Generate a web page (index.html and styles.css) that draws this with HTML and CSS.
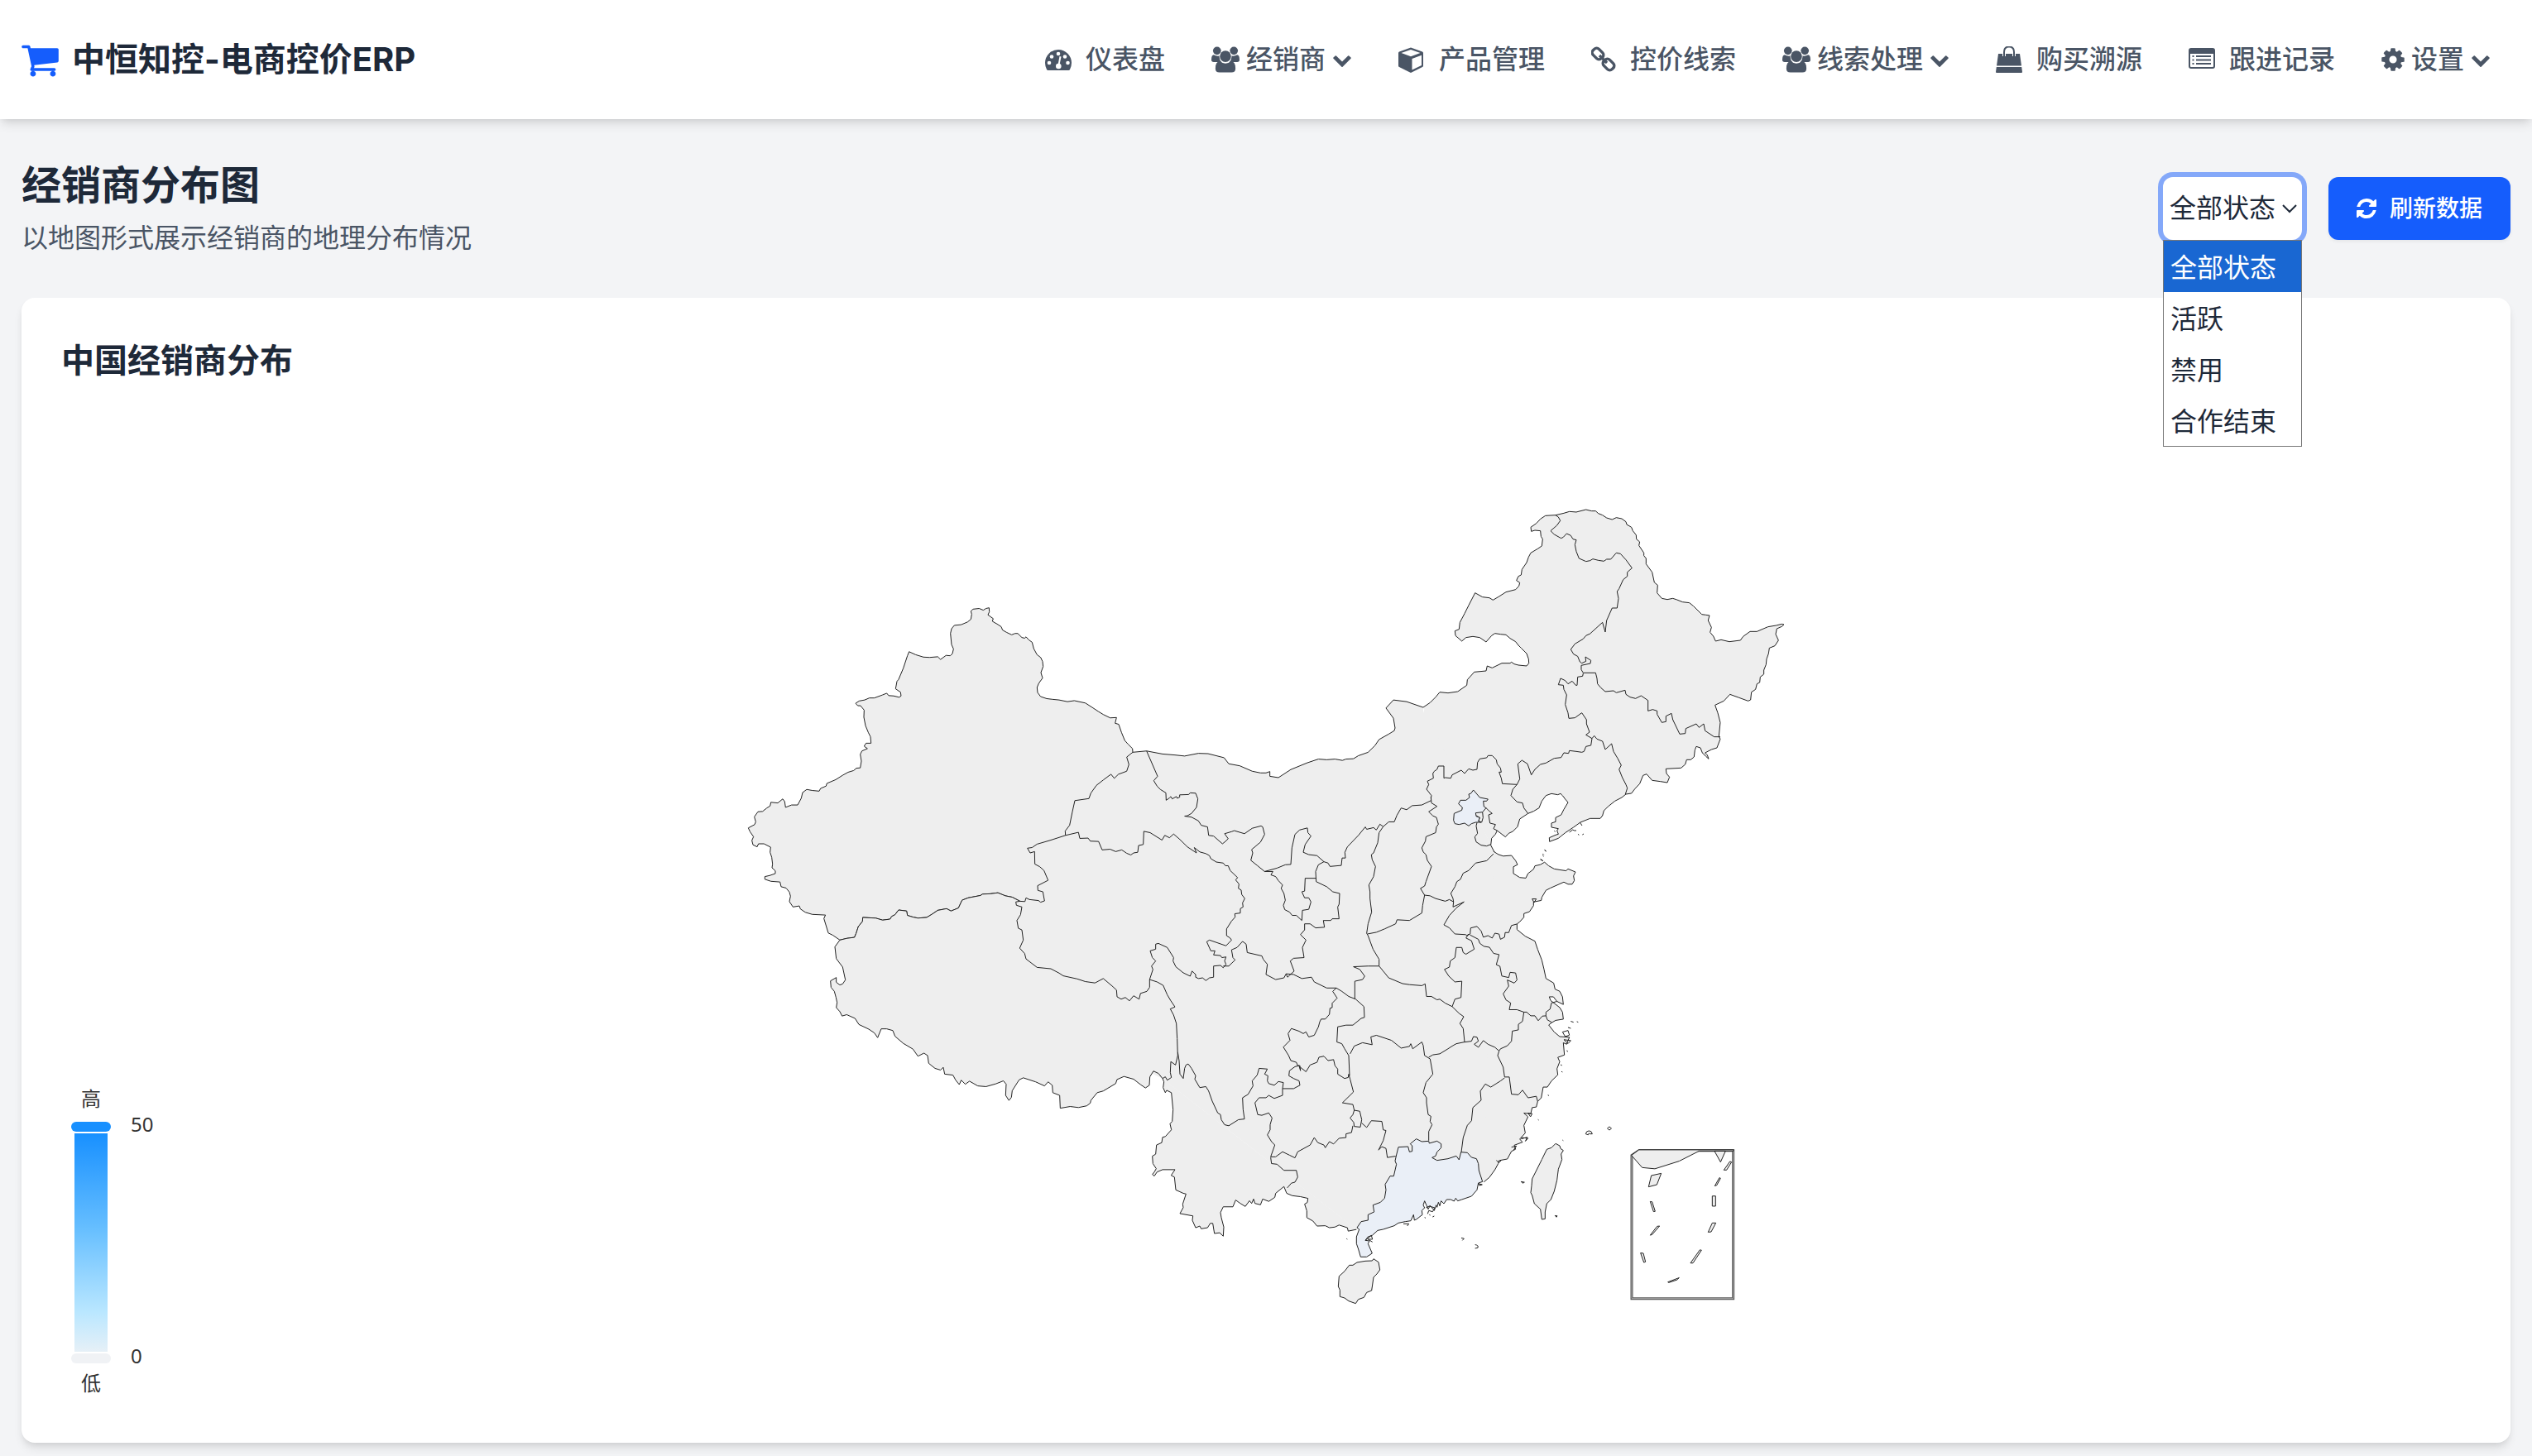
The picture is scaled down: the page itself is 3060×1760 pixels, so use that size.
FILE: index.html
```html
<!DOCTYPE html>
<html lang="zh-CN">
<head>
<meta charset="utf-8">
<meta name="viewport" content="width=device-width, initial-scale=1">
<title>经销商分布图 - 中恒知控</title>
<link rel="stylesheet" href="styles.css">
</head>
<body>
<svg class="sprite" aria-hidden="true">
  <symbol id="i-users" viewBox="0 0 35 34">
    <circle cx="7" cy="6" r="5"/><circle cx="28" cy="6" r="5"/>
    <path d="M3 11q2 1.500 5 1.500 2 0 2.500-.5-1 5 2 8H3q-3 0-3-2.500Q0 11 3 11zM32 11q-2 1.500-5 1.500-2 0-2.500-.5 1 5-2 8H32q3 0 3-2.500Q35 11 32 11z"/>
    <circle cx="17.500" cy="13" r="7.800" fill="#fff"/><circle cx="17.500" cy="13" r="7"/>
    <path d="M11 19q3 3 6.500 3t6.500-3q6 0 6 9 0 5-5 5H10q-5 0-5-5 0-9 6-9z"/>
  </symbol>
  <symbol id="i-chevron" viewBox="0 0 1792 1792"><path d="M1683 808l-742 741q-19 19-45 19t-45-19l-742-741q-19-19-19-45.500t19-45.500l166-165q19-19 45-19t45 19l531 531 531-531q19-19 45-19t45 19l166 165q19 19 19 45.500t-19 45.500z"/></symbol>
</svg>

<header class="topbar">
  <a class="brand" href="#">
    <svg class="brand-icon" viewBox="64 0 1664 1792" aria-hidden="true"><path d="M704 1536q0 52-38 90t-90 38-90-38-38-90 38-90 90-38 90 38 38 90zm896 0q0 52-38 90t-90 38-90-38-38-90 38-90 90-38 90 38 38 90zm128-1088v512q0 24-16.500 42.500t-40.500 21.500l-1044 122q13 60 13 70 0 16-24 64h920q26 0 45 19t19 45-19 45-45 19h-1024q-26 0-45-19t-19-45q0-11 8-31.500t16-36 21.500-40 15.500-29.500l-177-823h-204q-26 0-45-19t-19-45 19-45 45-19h256q16 0 28.500 6.500t19.500 15.500 13 24.500 8 26 5.500 29.500 4.500 26h1201q26 0 45 19t19 45z"/></svg>
    <span>中恒知控-电商控价ERP</span>
  </a>
  <nav class="nav" aria-label="主导航">
    <a class="nav-link" href="#">
      <svg class="icon" viewBox="0 0 32 32" aria-hidden="true"><path d="M0 20a16 16 0 0 1 32 0q0 4-2 8-.5 1-1.500 1h-25q-1 0-1.500-1-2-4-2-8z"/><g fill="#fff"><circle cx="5" cy="20" r="2.300"/><circle cx="8" cy="12.500" r="2.300"/><circle cx="16" cy="9" r="2.300"/><circle cx="24" cy="12.500" r="2.300"/><circle cx="27.500" cy="20" r="2.300"/><circle cx="16.300" cy="24" r="3.300"/><path d="M17.500 12l2 .5-2.200 11h-2z"/></g></svg>
      <span>仪表盘</span>
    </a>
    <button class="nav-link nav-menu" type="button"><svg class="icon icon-users" aria-hidden="true"><use href="#i-users"/></svg><span>经销商</span><svg class="icon-chevron" aria-hidden="true"><use href="#i-chevron"/></svg></button>
    <a class="nav-link" href="#">
      <svg class="icon" viewBox="0 0 32 32" aria-hidden="true"><path fill-rule="evenodd" d="M15 1.500l14 5q1 .5 1 1.500v15.500q0 1-1 1.500l-14 7-14-7q-1-.5-1-1.500V8q0-1 1-1.500zM15 4L3.500 8 15 12.300 26.500 8zM16.500 15v13.500L28 23V10.700z"/></svg>
      <span>产品管理</span>
    </a>
    <a class="nav-link" href="#">
      <svg class="icon icon-link" viewBox="0 0 30 32" aria-hidden="true"><g fill="none" stroke="currentColor" stroke-width="3.400"><rect x="-7" y="-5" width="14" height="10" rx="4" transform="translate(8 9) rotate(45)"/><rect x="-7" y="-5" width="14" height="10" rx="4" transform="translate(21 22) rotate(45)"/><path d="M10 11l9 9"/></g></svg>
      <span>控价线索</span>
    </a>
    <button class="nav-link nav-menu" type="button"><svg class="icon icon-users" aria-hidden="true"><use href="#i-users"/></svg><span>线索处理</span><svg class="icon-chevron" aria-hidden="true"><use href="#i-chevron"/></svg></button>
    <a class="nav-link" href="#">
      <svg class="icon" viewBox="0 0 32 32" aria-hidden="true"><path d="M3 9h26l2 14.500H1zM.8 25H31.200L32 31q0 1-1 1H1q-1 0-1-1z"/><path d="M10 12V7q0-6.500 6-6.500T22 7v5" fill="none" stroke="#fff" stroke-width="4"/><path d="M10 12V7q0-6.500 6-6.500T22 7v5" fill="none" stroke="currentColor" stroke-width="2"/></svg>
      <span>购买溯源</span>
    </a>
    <a class="nav-link" href="#">
      <svg class="icon" viewBox="0 0 32 32" aria-hidden="true"><path fill-rule="evenodd" d="M3 2h26q3 0 3 3v19q0 3-3 3H3q-3 0-3-3V5q0-3 3-3zM2 9v15q0 1 1 1h26q1 0 1-1V9zM4.500 11h2v2h-2zM9 11h18v2H9zM4.500 15.500h2v2h-2zM9 15.500h18v2H9zM4.500 20h2v2h-2zM9 20h18v2H9z"/></svg>
      <span>跟进记录</span>
    </a>
    <button class="nav-link nav-menu" type="button"><svg class="icon icon-cog" viewBox="128 0 1536 1792" aria-hidden="true"><path d="M1152 896q0-106-75-181t-181-75-181 75-75 181 75 181 181 75 181-75 75-181zm512-109v222q0 12-8 23t-20 13l-185 28q-19 54-39 91 35 50 107 138 10 12 10 25t-9 23q-27 37-99 108t-94 71q-12 0-26-9l-138-108q-44 23-91 38-16 136-29 186-7 28-36 28h-222q-14 0-24.500-8.500t-11.500-21.500l-28-184q-49-16-90-37l-141 107q-10 9-25 9-14 0-25-11-126-114-165-168-7-10-7-23 0-12 8-23 15-21 51-66.500t54-70.500q-27-50-41-99l-183-27q-13-2-21-12.500t-8-23.500v-222q0-12 8-23t19-13l186-28q14-46 39-92-40-57-107-138-10-12-10-24 0-10 9-23 26-36 98.500-107.500t94.500-71.500q13 0 26 10l138 107q44-23 91-38 16-136 29-186 7-28 36-28h222q14 0 24.500 8.500t11.500 21.500l28 184q49 16 90 37l142-107q9-9 24-9 13 0 25 10 129 119 165 170 7 8 7 22 0 12-8 23-15 21-51 66.500t-54 70.500q26 50 41 98l183 28q13 2 21 12.500t8 23.500z"/></svg><span>设置</span><svg class="icon-chevron" aria-hidden="true"><use href="#i-chevron"/></svg></button>
  </nav>
</header>

<main class="page">
  <div class="page-head">
    <div class="page-heading">
      <h1>经销商分布图</h1>
      <p>以地图形式展示经销商的地理分布情况</p>
    </div>
    <div class="actions">
      <div class="status-filter">
        <select class="status-select" aria-label="经销商状态">
          <option selected>全部状态</option>
          <option>活跃</option>
          <option>禁用</option>
          <option>合作结束</option>
        </select>
        <svg class="select-arrow" viewBox="0 0 18 18" aria-hidden="true"><path d="M1 5l8 8 8-8" fill="none" stroke="currentColor" stroke-width="2"/></svg>
        <ul class="options" role="listbox" aria-label="经销商状态选项">
          <li class="option is-active" role="option" aria-selected="true">全部状态</li>
          <li class="option" role="option">活跃</li>
          <li class="option" role="option">禁用</li>
          <li class="option" role="option">合作结束</li>
        </ul>
      </div>
      <button class="refresh" type="button">
        <svg class="refresh-icon" viewBox="128 128 1536 1536" aria-hidden="true"><path d="M1639 1056q0 5-1 7-64 268-268 434.500t-478 166.500q-146 0-282.500-55t-243.500-157l-129 129q-19 19-45 19t-45-19-19-45v-448q0-26 19-45t45-19h448q26 0 45 19t19 45-19 45l-137 137q71 66 161 102t187 36q134 0 250-65t186-179q11-17 53-117 8-23 30-23h192q13 0 22.500 9.500t9.500 22.500zm25-800v448q0 26-19 45t-45 19h-448q-26 0-45-19t-19-45 19-45l138-138q-148-137-349-137-134 0-250 65t-186 179q-11 17-53 117-8 23-30 23h-199q-13 0-22.500-9.500t-9.500-22.500v-7q65-268 270-434.500t480-166.500q146 0 284 55.500t245 156.500l130-129q19-19 45-19t45 19 19 45z"/></svg>
        <span>刷新数据</span>
      </button>
    </div>
  </div>

  <section class="card">
    <h2>中国经销商分布</h2>
    <div class="chart">
      <svg class="map" viewBox="890 600 1280 992" role="img" aria-label="中国经销商分布地图">
        <polygon class="ground" points="1368,912 1388,950 1690,950 1722,856 1806,1030 1795,1428 1639,1486 1405,1304 1240,1220 1180,1000 1270,960"/>

        <!-- 东北、内蒙古、华北 -->
        <g transform="translate(1720 600) scale(.33333)">
          <path class="region" d="M0 765L25 748 45 728 60 710 90 713 125 708 158 685 160 665 185 637 228 633 232 615 250 622 285 605 315 605 320 601 330 608 345 612 375 615 383 605 382 590 375 570 355 550 345 540 335 527 315 515 300 502 280 500 260 497 248 505 228 528 205 512 180 508 155 512 140 525 117 505 115 488 130 482 133 457 150 425 165 395 188 350 215 365 240 368 253 376 275 363 300 347 335 338 347 325 350 313 338 305 345 290 355 285 358 265 375 240 382 220 390 205 415 190 430 180 433 155 427 145 425 125 405 123 392 127 390 112 410 98 425 82 443 70 480 68 510 61 530 55 555 57 590 48 610 53 625 53 635 62 650 68 665 78 685 84 700 77 720 81 735 92 738 102 755 112 760 125 772 140 773 155 785 165 782 178 800 205 800 215 808 225 808 245 830 275 838 312 850 322 848 350 865 370 885 374 905 370 920 375 940 383 965 386 980 398 1010 428 1025 430 1038 432 1033 450 1045 475 1040 493 1052 507 1060 525 1080 520 1110 527 1150 522 1160 508 1185 490 1210 490 1250 473 1280 468 1300 463 1308 465 1300 472 1282 480 1278 500 1288 522 1275 542 1255 550 1252 570 1245 590 1243 610 1235 630 1235 645 1222 655 1220 675 1210 680 1205 700 1190 710 1187 738 1178 742 1145 730 1112 718 1090 742 1058 757 1068 785 1077 820 1072 870 1077 880 1065 912 1045 918 1022 930 1030 938 1035 952 1025 943 1012 930 1005 912 990 907 985 920 982 945 970 955 955 955 950 972 935 985 880 988 882 1005 893 1018 885 1038 860 1034 830 1030 810 1007 797 1012 785 1042 768 1060 755 1077 735 1080 720 1092 695 1105 670 1125 655 1140 650 1158 642 1168 605 1168 570 1182 545 1200 515 1220 500 1232 490 1240 458 1252 457 1238 480 1228 490 1225 485 1212 490 1205 465 1200 465 1185 480 1180 480 1165 500 1155 510 1135 525 1110 515 1098 505 1085 498 1078 488 1082 465 1078 445 1085 430 1105 420 1130 400 1142 380 1150 350 1170 342 1198 325 1215 310 1222 298 1235 285 1225 268 1212 262 1225 248 1240 245 1265 258 1290"/>
          <path class="border" d="M480 68L490 75 497 88 485 105 462 125 475 138 500 152 508 148 520 135 535 142 543 155 555 158 550 175 555 200 565 225 590 236 605 233 615 227 635 232 655 235 665 228 680 228 700 205 715 208 735 230 757 260 740 275 740 290 725 302 710 335 703 345 708 370 703 405 685 405 665 450 660 492 650 457 605 498 590 505 580 517 550 535 535 555 545 572 560 580 568 600 575 605 590 598 588 582 608 595 606 606 573 613 573 628 580 640 625 640 630 660 632 680 645 695 660 708 690 705 700 712 732 703 735 718 750 728 770 733 790 723 815 740 815 778 832 773 848 778 848 790 865 820 880 817 880 797 900 787 905 810 930 862 950 860 952 842 990 825 1000 838 1017 825 1022 850 1055 872 1077 872M580 642L578 652 560 655 558 685 553 685 540 670 525 680 515 668 498 660 490 683 508 685 510 700 520 720 515 755 525 785 528 805 550 803 575 785 592 810 592 825 603 855 590 865 612 878 608 903 590 907 583 925 575 928 555 925 530 922 527 932 510 930 500 947 475 950 445 967 425 972 405 990 392 1010 378 970 358 957 343 970 350 1025 340 1045 287 1042 283 1022 275 1000 283 1000 280 985 268 970 265 955 250 940 235 940 230 948 205 952 197 965 195 990 180 993 165 988 150 1005 138 993 105 1010 100 1022 80 1020 75 1022 75 978 55 978 50 990 40 997 35 1005 37 1022 15 1033 20 1045 12 1062 30 1085 28 1094M340 1045L325 1062 318 1085 340 1108 360 1112 365 1130 380 1150M612 878L620 868 630 880 650 888 660 918 683 897 690 925 705 950 718 975 710 990 722 1020 735 1045 740 1058 733 1080M228 1130L238 1140 250 1150 237 1155 242 1185 262 1190 255 1205 268 1212M195 1183L192 1195 197 1222 187 1235 192 1253 210 1265 230 1268 245 1262M215 1145L217 1165 212 1182 200 1178 205 1165 192 1158"/>
          <path class="region is-low" d="M182 1065L195 1080 205 1092 235 1098 230 1105 218 1105 220 1125 228 1130 215 1145 190 1148 192 1160 205 1165 200 1178 210 1182 190 1182 175 1187 165 1195 150 1185 130 1190 115 1187 110 1175 112 1150 140 1138 142 1128 128 1115 135 1102 155 1102 168 1092 165 1080 172 1078z"/>
          <path class="border" d="M475 1213l4 3M530 1218l12-9 6 3 7 0M568 1182l8 12M561 1225l4 3M577 1227l5-3M440 1283l6 4M433 1296l4 4M425 1315l10 8"/>
        </g>

        <!-- 西北、西南、华中 -->
        <g transform="translate(1370 880) scale(.33333 .40816)">
          <path class="ground" d="M-5 72L47 68 105 77 150 80 185 83 235 75 270 76 328 88 345 106 385 112 430 128 460 133 480 133 494 129 494 143 525 147 570 123 630 103 670 92 700 94 730 92 757 96 770 92 797 91 815 82 850 72 875 52 890 34 925 18 945 8 948 0 942 -29 915 -59 942 -83 990 -78 1050 -61V300H-5z"/>
          <path class="border" d="M-5 72L47 68 105 77 150 80 185 83 235 75 270 76 328 88 345 106 385 112 430 128 460 133 480 133 494 129 494 143 525 147 570 123 630 103 670 92 700 94 730 92 757 96 770 92 797 91 815 82 850 72 875 52 890 34 925 18 945 8 948 0 942 -29 915 -59 942 -83 990 -78 1050 -61"/>
          <path class="region" d="M105 1038L110 1048 107 1065 115 1080 120 1073 137 1080 143 1130 140 1165 132 1172 137 1190 115 1210 105 1212 102 1228 83 1235 80 1262 68 1268 70 1290 82 1305 75 1315 68 1322 75 1327 85 1315 105 1308 150 1308 136 1325 148 1330 153 1368 180 1378 190 1380 178 1410 180 1420 168 1438 215 1445 213 1458 225 1480 240 1475 245 1483 268 1480 278 1467 287 1467 293 1497 312 1495 325 1505 327 1478 318 1450 315 1435 325 1418 360 1418 370 1398 385 1407 405 1417 420 1400 428 1408 435 1395 440 1408 460 1412 468 1395 490 1402 512 1390 515 1378 545 1358 555 1378 575 1385 605 1388 632 1393 630 1405 620 1410 628 1430 628 1450 650 1460 665 1475 695 1474 710 1480 730 1478 745 1472 775 1480 778 1490 808 1485"/>
          <path class="border" d="M47 68L87 143 73 156 85 172 97 182 117 192 118 214 130 207 135 203 140 210 155 203 158 208 167 205 167 198 200 197 205 192 225 193 233 210 228 235 210 253 195 260 185 261 210 264 235 275 245 288 268 293 272 318 290 320 322 343 330 338 343 328 330 313 355 307 365 304 402 313 430 297 462 290 468 293 475 315 460 338 428 360 432 370 425 392 448 407 475 425 520 415 550 405 570 404 574 355 585 315 602 302 630 296 632 310 643 320 622 345 615 368 635 375 665 378 690 396 705 400 712 410 753 407 756 385 768 385 766 368 775 352 815 318 840 293 845 300 870 295 880 302 893 285 905 292 925 278 945 278 955 258 970 237 990 242 1010 230 1045 228 1078 215"/>
          <path class="border" d="M0 370L15 368 18 348 35 345 37 306 60 310 103 332 113 318 130 325 145 314 165 328 195 352 228 370 220 354 240 367 262 372 275 378 280 387 300 397 325 400 333 408 343 408 350 422 377 443 370 450 382 462 380 475 390 480 392 493 403 505 395 518 397 530 387 535 387 548 367 550 368 560 355 572 337 595 337 615 350 622 355 628 335 645 275 628 265 633 280 660 295 660 290 672 315 674 320 680 335 678 330 690 335 700 325 710 315 703 290 705 290 738 275 740 262 748 250 740 235 742 225 738 225 730 212 720 205 735 180 725 153 707 143 690 145 680 122 650 90 638 80 640 80 655 60 660 68 680 80 690 65 705 70 715 58 745"/>
          <path class="border" d="M325 705L345 705 368 687 360 680 355 657 375 650 395 632 408 640 412 665 465 675 470 685 485 700 480 730 515 745 545 740 553 728 580 730 610 742 645 738 655 752 700 770 735 770 755 780 780 795 805 803M553 728L558 738 582 720 568 690 580 682 618 680 612 650 625 628 605 612 620 598 620 580 640 580 660 592 692 590 688 570 715 570 720 565 745 565 740 530 745 522 747 490 722 485 700 470 662 455 660 425 670 405 690 396M475 425L505 425 498 435 515 440 525 452 540 465 535 475 545 490 550 510 543 525 548 538 565 545 575 555 590 555 610 570 612 540 635 537 643 515 635 503 620 503 610 485 620 483 622 445 662 445M905 292L890 310 885 340 870 370 862 375 865 390 877 410 870 440 853 465 857 485 857 505 863 545 850 580 845 608 850 615 868 655 890 685 890 705 850 705 797 707 820 715 838 735 830 745 802 750 802 803M848 610L880 605 910 595 950 580 955 568 1000 570 1045 548 1048 525 1055 495M1078 205L1080 222 1100 232 1070 248 1085 260 1098 265 1105 285 1098 293 1095 310 1060 322 1058 335 1045 355 1050 367 1060 375 1065 392 1080 410 1060 455 1055 468 1040 475 1055 495 1075 497 1095 505 1130 513 1145 508 1160 515 1158 505 1150 490 1165 470 1172 455 1185 448 1195 430 1215 422 1240 400 1280 393 1290 385 1308 370M1160 515L1158 530 1198 515 1170 533 1145 555 1125 583 1145 592 1165 610 1205 612M890 705L905 720 925 740 975 757 1000 760 1045 763 1057 758 1062 795 1080 795 1100 805 1110 803 1130 815 1155 825 1165 803 1187 798 1190 750 1165 752 1143 735 1127 715 1145 708 1148 690 1165 680 1170 650 1190 650 1195 665 1205 670 1235 655 1225 630 1205 622 1215 610M735 770L722 780 738 800 720 815 720 828 712 830 710 848 695 862 680 862 675 870 670 885 655 910 635 915 625 900 615 905 600 898 572 890 560 905 567 925 543 945 562 970 570 985 590 990 595 1000 603 1000 605 1015"/>
          <path class="border" d="M605 1015L600 1000 585 1003 565 1015 563 1030 580 1038 600 1045 603 1058 580 1068 540 1068 543 1050 525 1047 510 1058 490 1053 485 1045 487 1030 475 1025 485 1010 455 1008 448 1028 430 1045 433 1060 415 1085 395 1095 397 1130 402 1158 380 1160 345 1178 330 1175 318 1160 315 1145 305 1140 285 1105 272 1075 262 1062 240 1065 222 1040 225 1030 210 1008 198 995 190 998 185 1008 180 1038 168 1025 165 985 160 960M540 1068L540 1088 510 1097 490 1088 480 1095 455 1095 440 1110 450 1145 465 1147 490 1140 502 1155 495 1175 495 1190 485 1205 500 1225 512 1235 497 1270 515 1270 540 1255 565 1265 585 1273 595 1255 640 1235 655 1213 668 1228 690 1235 695 1243 710 1225 725 1232 745 1215 770 1213 770 1202 790 1198 795 1178M605 1005L625 1018 640 998 665 990 672 975 690 972 705 985 725 982 730 1000 740 1010 740 1025 765 1038 778 1035 780 1025 785 1040 797 1078 757 1110 795 1115 800 1132 820 1135 827 1160 822 1182 800 1180 798 1168 785 1155 795 1145 800 1132M827 1170L845 1183 862 1163 900 1165 905 1190 915 1192 905 1222 888 1250 900 1240 915 1245 920 1272 950 1268M805 803L835 825 837 857 825 860 795 880 770 880 740 885 737 930 755 935 765 950 780 970 783 1030M785 965L800 942 830 932 865 938 860 915 880 910 935 925 970 948 1000 943 1005 935 1012 950 1045 930 1050 940 1055 970 1075 980 1085 1025 1060 1050 1050 1080 1062 1095 1062 1110 1068 1145 1078 1150 1075 1165 1082 1175 1070 1195 1070 1222M1070 975L1085 968 1110 965 1140 950 1155 942 1170 935 1200 930M1155 825L1180 845 1197 855 1183 875 1195 890 1200 930M497 1272L500 1290 520 1292 545 1310 590 1310 595 1330 585 1345 572 1348 557 1362"/>
        </g>

        <!-- 新疆、西藏 -->
        <g transform="translate(890 720) scale(.33333 .40816)">
          <path class="region" d="M1437 464L1436 453 1420 440 1408 429 1396 405 1386 381 1373 378 1378 361 1355 362 1330 352 1312 343 1290 331 1265 318 1225 311 1200 314 1170 309 1145 307 1125 305 1103 299 1092 287 1090 272 1096 260 1110 244 1104 228 1112 210 1110 195 1103 183 1090 175 1078 157 1072 138 1060 131 1050 122 1045 126 1035 124 1020 112 1010 112 998 116 980 109 965 102 960 92 945 84 928 76 931 68 912 57 917 48 916 36 905 38 895 43 880 38 858 40 850 46 853 55 850 70 838 78 815 86 790 88 780 98 776 112 780 145 787 158 783 172 775 178 760 177 740 189 730 181 700 183 678 182 650 175 626 166 620 178 605 215 588 248 582 254 577 276 595 286 597 297 590 301 570 297 552 296 545 289 530 294 500 303 482 303 465 309 445 312 432 319 440 326 450 326 463 339 462 360 468 385 478 405 486 418 488 437 470 437 463 446 475 453 455 460 449 470 453 490 449 510 435 511 425 518 405 523 385 532 360 545 328 556 325 564 305 571 300 579 275 577 255 574 240 583 235 600 222 620 200 620 178 627 175 610 168 602 150 614 125 612 122 623 110 629 95 639 78 640 65 655 70 670 66 678 43 688 50 700 62 714 56 725 60 738 75 744 80 735 100 735 124 745 122 760 128 775 131 795 129 806 141 815 141 823 120 829 103 832 103 840 125 846 158 848 162 862 180 866 192 878 196 890 192 906 205 922 228 919 232 928 250 938 275 944 300 945 323 946 317 956 326 980 333 999 350 1006 375 1020 400 1015 428 1012 434 1000 442 980 457 965 458 953 480 954 505 955 530 961 557 958 563 950 575 945 588 931 617 934 620 947 640 952 658 955 690 953 710 943 730 932 762 927 778 934 805 925 818 902 840 895 885 888 892 884 920 883 948 880 975 889 1000 893 1028 905 1046 906 1050 895 1062 900 1095 903 1103 908 1117 904 1111 877 1093 873 1092 859 1130 843 1115 814 1100 803 1082 795 1081 758 1065 762 1055 748 1072 746 1090 736 1140 724 1193 710 1192 697 1208 680 1218 640 1227 607 1278 601 1285 585 1305 562 1330 546 1358 529 1370 541 1385 529 1415 520 1423 500 1415 478z"/>
          <path class="region" d="M375 1020L357 1040 362 1075 385 1100 395 1138 385 1150 375 1153 362 1145 362 1131 341 1141 343 1160 355 1172 361 1190 365 1205 362 1220 375 1232 383 1245 400 1241 430 1252 444 1270 480 1284 500 1295 512 1309 525 1283 545 1283 567 1288 575 1305 605 1326 640 1343 658 1364 680 1355 693 1362 697 1385 720 1400 740 1405 750 1397 755 1417 785 1420 795 1435 808 1448 815 1435 830 1447 845 1438 875 1452 905 1454 940 1446 968 1437 978 1447 976 1480 988 1495 997 1486 1000 1466 1025 1434 1040 1428 1085 1440 1117 1452 1130 1440 1145 1450 1147 1472 1172 1480 1174 1518 1210 1513 1240 1516 1270 1511 1283 1503 1285 1495 1308 1472 1330 1467 1375 1445 1380 1433 1405 1424 1440 1432 1465 1448 1483 1458 1497 1450 1499 1425 1512 1408 1530 1415 1545 1430 1555 1425 1562 1435 1577 1427 1573 1412 1575 1380 1592 1390 1600 1362 1598 1312 1595 1267 1585 1242 1573 1224 1590 1218 1575 1200 1562 1182 1547 1154 1525 1144 1498 1137 1498 1160 1488 1172 1465 1178 1460 1195 1440 1185 1425 1200 1410 1190 1395 1195 1380 1188 1378 1168 1362 1156 1330 1134 1300 1147 1265 1143 1235 1135 1185 1126 1170 1118 1140 1105 1090 1101 1050 1076 1045 1060 1027 1044 1040 1020 1035 990 1022 985 1017 962 1030 945 1035 922 1015 917 1013 907 1028 905 1000 893 975 889 948 880 920 883 892 884 885 888 840 895 818 902 805 925 778 934 762 927 730 932 710 943 690 953 658 955 640 952 620 947 617 934 588 931 575 945 563 950 557 958 530 961 505 955 480 954 458 953 457 965 442 980 434 1000 428 1012 400 1015z"/>
          <path class="border" d="M1193 710L1240 701 1245 719 1275 718 1283 727 1313 728 1326 753 1355 751 1375 758 1397 753 1415 763 1430 768 1440 762"/>
        </g>

        <!-- 华东沿海、台湾与南海诸岛 -->
        <g transform="translate(1640 1020) scale(.33333 .36990)">
          <path class="region" d="M495 25L513 35 530 40 560 38 575 55 582 68 567 75 567 97 590 110 612 112 620 97 640 83 645 72 665 68 680 60 695 72 715 82 735 85 758 88 765 82 792 92 785 105 788 120 780 132 765 132 750 125 720 137 700 145 685 152 670 175 668 185 640 190 640 202 625 222 605 228 605 240 590 255 580 262 580 280 610 302 645 318 655 345 670 380 678 410 685 440 713 455 718 475 735 482 745 500 748 525 725 515 712 500 697 500 702 512 735 535 745 550 748 573 720 577 705 585 695 592 715 615 735 630 770 632 760 655 748 650 752 690 728 698 735 712 725 735 728 755 705 775 690 795 675 795 668 830 655 842 650 860 635 862 630 882 605 880 620 892 605 920 610 945 590 965 600 975 570 985 575 998 560 1005 545 1030 515 1035 512 1045 500 1065 480 1090 460 1105"/>
          <path class="border" d="M395 300L410 295 412 275 435 270 450 285 458 305 475 300 490 308 500 292 515 295 520 312 535 305 537 290 550 290 560 267 580 262M410 298L440 312 445 325 460 335 480 338 495 358 515 362 505 395 518 400 525 432 550 437 555 420 575 422 580 445 570 455 545 445 550 465 530 490 540 510 557 520 552 542 580 542 605 550 615 550 630 562 645 562 657 578 672 563 685 562 685 550 700 540 705 520 725 515M685 562L690 575 705 583M605 550L600 580 585 590 585 608 563 612 560 645 545 660 520 670 515 677M390 648L415 645 422 630 435 632 440 645 425 655 440 665 458 643 475 655 500 665 515 677 510 692 530 730 535 762 552 762 560 818 585 820 600 805 620 830 650 825 655 842M535 765L520 775 485 795 465 785 447 808 450 838 420 862 415 905 400 920 385 960 378 1008"/>
          <path class="border" d="M745 615l20-5 5 15-15 5zM765 600l10 3M775 580l10 3M797 581l5 2M750 640l25 3-10 10zM760 676l5 3M738 722l5 2M741 744l4 2M692 821l4 2M656 901l3 2M620 880l15 2-6 10zM595 960l25 2-10 10M635 180l15 0-8 12zM680 20l5 4M673 38l4 3M665 52l8 2M745 968l3 2M595 1104l12 2-6 3zM718 1215l8 1-3 4zM378 1288l10 2-6 6M428 1310q14 2 10 10l-10 2M829 948q2-10 12-10t12 10l-9 0q-3-6-6 3zM908 930q7-10 14 0-7 10-14 0z"/>
          <path class="frame" d="M996 1018V1486H1364V1002H1022z"/>
          <path class="frame-inner" d="M996 1018V1486H1364V1002"/>
          <path class="region" d="M995 1018L1022 1000H1366L1364 1004H1240L1168 1037 1080 1062 1034 1058zM1296 1004H1336L1318 1040zM1067 1084L1103 1077 1087 1114 1057 1121zM1063 1169L1070 1170 1081 1201 1075 1202zM1063 1279L1088 1250 1097 1249 1070 1277zM1028 1337L1038 1338 1046 1366 1040 1368zM1127 1432L1168 1418 1160 1425 1130 1434zM1209 1370L1243 1327 1249 1328 1218 1370zM1273 1269L1288 1239 1301 1239 1284 1268zM1288 1151H1300V1184H1288zM1297 1118L1314 1091 1318 1093 1304 1116zM1330 1066L1352 1038 1358 1040 1340 1066z"/>
        </g>

        <!-- 广东、海南、台湾 -->
        <g transform="translate(1590 1360) scale(.33333)">
          <path class="region is-low" d="M158 378L150 372 165 350 190 345 190 325 212 315 208 290 235 280 250 265 255 235 252 215 270 185 283 185 293 142 288 130 293 108 300 80 335 78 340 97 350 95 350 75 343 68 365 50 385 60 410 58 412 66 440 58 455 68 455 82 440 98 435 112 422 118 440 128 480 122 510 112 520 126 527 98 550 100 565 117 583 122 590 140 592 165 605 205 590 210 585 235 565 258 530 270 515 275 508 265 502 276 490 270 475 270 465 285 455 275 450 293 445 280 440 298 437 290 430 310 415 292 408 305 395 275 390 290 395 300 385 310 387 325 365 342 358 345 355 325 345 347 325 350 300 355 285 365 245 378 225 382 205 400 190 405 180 418 195 420 190 430 205 465 185 478 163 478 155 450 148 430 148 405z"/>
          <path class="region" d="M85 548L105 530 122 508 135 508 150 498 180 493 205 492 210 485 228 497 233 525 222 540 210 552 203 600 185 607 175 625 155 632 145 647 120 638 105 627 88 622 88 598 82 585zM785 195L800 165 820 125 838 88 855 82 870 67 885 75 888 85 898 92 890 105 893 125 880 160 875 200 865 240 853 270 838 285 832 315 832 340 820 342 815 305 793 285 785 255 780 245 783 220z"/>
          <path class="border" d="M400 300l12-6 20 6-8 14-14-4-4 12M395 335l4 2M412 325l4 2M424 333l6-3M590 212l14 4-10 3zM180 418l22-18 4 14-16 0 16 10M318 358l20 0-6 8M112 412l3 2M655 128l10 8 8-8M710 80l18-4-10 14M745 50l22-6-6 14"/>
        </g>
      </svg>

      <div class="legend">
        <span class="legend-end">高</span>
        <div class="legend-scale">
          <div class="legend-bar">
            <i class="handle handle-high"></i>
            <i class="ramp"></i>
            <i class="handle handle-low"></i>
          </div>
          <div class="legend-values"><span>50</span><span>0</span></div>
        </div>
        <span class="legend-end">低</span>
      </div>
    </div>
  </section>
</main>
</body>
</html>
```
FILE: styles.css
```css
* {
  box-sizing: border-box;
}

body {
  margin: 0;
  background: #f3f4f6;
  color: #1e2939;
  font-family: Inter, "Noto Sans CJK SC", sans-serif;
  font-size: 32px;
  line-height: 48px;
}

h1, h2, p, ul {
  margin: 0;
  padding: 0;
}

button, select {
  font: inherit;
  color: inherit;
  border: 0;
}

svg {
  fill: currentColor;
  flex: none;
}

.sprite {
  position: absolute;
  width: 0;
  height: 0;
}

.topbar {
  display: flex;
  align-items: center;
  justify-content: space-between;
  min-height: 144px;
  padding: 0 50px 0 26px;
  background: #fff;
  box-shadow: 0 8px 12px -2px rgba(0, 0, 0, .1), 0 4px 8px -4px rgba(0, 0, 0, .1);
}

.brand {
  display: flex;
  align-items: center;
  gap: 16px;
  color: #1e2939;
  font-size: 40px;
  font-weight: 700;
  line-height: 56px;
  text-decoration: none;
}

.brand-icon {
  width: 45px;
  height: 48px;
  color: #155dfc;
}

.nav {
  display: flex;
  align-items: center;
  gap: 56px;
  color: #4a5565;
  font-weight: 500;
}

.nav-link {
  display: flex;
  align-items: center;
  gap: 17px;
  padding: 0;
  background: none;
  color: inherit;
  text-decoration: none;
  white-space: nowrap;
}

.nav-menu {
  gap: 8px;
}

.icon {
  width: 32px;
  height: 32px;
}

.icon-users {
  width: 34px;
  height: 34px;
}

.icon-link {
  width: 30px;
}

.icon-cog {
  width: 28px;
}

.icon-chevron {
  width: 24px;
  height: 24px;
}

.page {
  padding: 48px 26px 16px;
}

.page-head {
  display: flex;
  align-items: center;
  justify-content: space-between;
  margin-bottom: 48px;
}

.page-heading {
  display: grid;
  gap: 8px;
}

h1 {
  font-size: 48px;
  font-weight: 700;
  line-height: 64px;
}

.page-heading p {
  color: #4a5565;
}

.actions {
  display: flex;
  gap: 32px;
}

.status-filter {
  position: relative;
  width: 168px;
}

.status-select {
  display: block;
  width: 100%;
  height: 76px;
  padding: 0 8px;
  appearance: none;
  background: #fff;
  border-radius: 12px;
  box-shadow: 0 0 0 6px #84a8f9;
  outline: 0;
}

.select-arrow {
  position: absolute;
  top: 29px;
  right: 6px;
  width: 18px;
  height: 18px;
  pointer-events: none;
}

.options {
  position: absolute;
  z-index: 1;
  top: 100%;
  left: 0;
  width: 100%;
  border: 1px solid #767676;
  background: #fff;
  list-style: none;
}

.option {
  padding: 4px 8px 0;
  line-height: 58px;
}

.option.is-active {
  background: #1967d2;
  color: #fff;
}

.refresh {
  display: flex;
  align-items: center;
  gap: 16px;
  height: 76px;
  padding: 0 34px;
  border-radius: 12px;
  background: #155dfc;
  box-shadow: 0 2px 4px rgba(0, 0, 0, .06);
  color: #fff;
  font-size: 28px;
  font-weight: 500;
  line-height: 40px;
}

.refresh-icon {
  width: 24px;
  height: 24px;
}

.card {
  padding: 48px;
  border-radius: 16px;
  background: #fff;
  box-shadow: 0 8px 12px -2px rgba(0, 0, 0, .1), 0 4px 8px -4px rgba(0, 0, 0, .1);
}

h2 {
  margin-bottom: 32px;
  font-size: 40px;
  font-weight: 700;
  line-height: 56px;
}

.chart {
  display: grid;
  min-height: 1200px;
}

.chart > * {
  grid-area: 1 / 1;
}

.map {
  place-self: center;
  width: 100%;
  max-width: 1280px;
}

.ground {
  fill: #eee;
}

.region {
  fill: #eee;
  stroke: #222;
  stroke-width: 1px;
  vector-effect: non-scaling-stroke;
}

.region.is-low {
  fill: #eaeff7;
}

.border {
  fill: none;
  stroke: #222;
  stroke-width: 1px;
  vector-effect: non-scaling-stroke;
}

.frame {
  fill: none;
  stroke: #555;
  stroke-width: 3px;
  vector-effect: non-scaling-stroke;
}

.frame-inner {
  fill: none;
  stroke: #aaa;
  stroke-width: 1px;
  vector-effect: non-scaling-stroke;
}

.legend {
  place-self: end start;
  display: grid;
  gap: 8px;
  padding: 0 0 8px 12px;
  color: #333;
  font-family: "Noto Sans", "Noto Sans CJK SC", sans-serif;
  font-size: 24px;
  line-height: 32px;
}

.legend-end {
  width: 48px;
  text-align: center;
}

.legend-scale {
  display: flex;
  gap: 24px;
  height: 296px;
}

.legend-bar {
  display: flex;
  flex-direction: column;
  align-items: center;
  gap: 2px;
  width: 48px;
  padding-top: 4px;
}

.handle {
  width: 48px;
  height: 12px;
  border-radius: 6px;
}

.handle-high {
  background: #1890ff;
}

.handle-low {
  background: #f0f2f5;
}

.ramp {
  width: 40px;
  height: 264px;
  background: linear-gradient(#1890ff, #69c0ff 45%, #bae7ff 82%, #e6f0f7);
}

.legend-values {
  display: flex;
  flex-direction: column;
  justify-content: space-between;
  margin: -9px 0 -7px;
}
```
